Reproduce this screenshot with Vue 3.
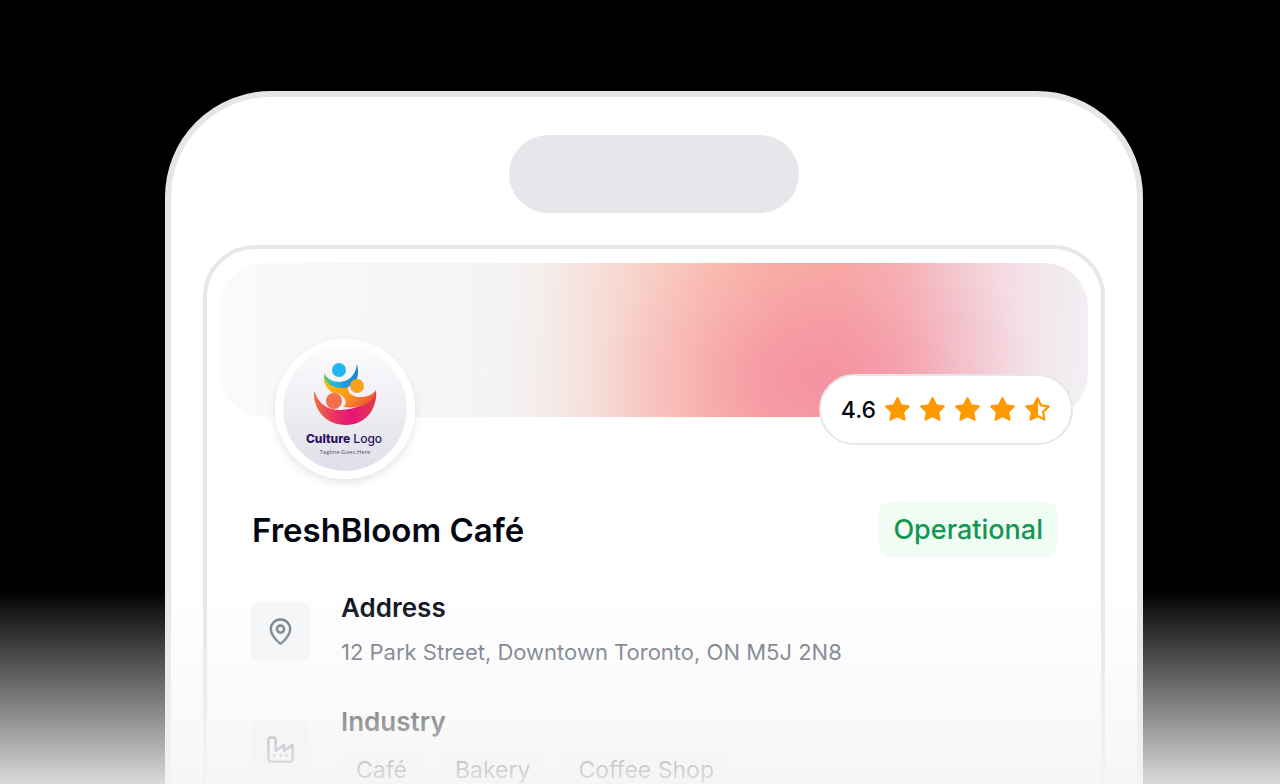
<script setup>
const stars = ['full', 'full', 'full', 'full', 'half']
const industries = ['Café', 'Bakery', 'Coffee Shop']
</script>

<template>
  <main class="stage">
    <section class="phone">
      <div class="island"></div>
      <article class="card">
        <div class="banner">
          <svg class="avatar" viewBox="0 0 124 124" role="img" aria-label="Culture Logo">
            <defs>
              <linearGradient id="plate" x1="0" y1="0" x2="0" y2="1">
                <stop offset="0" stop-color="#fcfcfe" />
                <stop offset="1" stop-color="#dfdfe9" />
              </linearGradient>
              <linearGradient id="blue" x1="0" y1="0" x2="1" y2="0">
                <stop offset="0" stop-color="#5cc66a" />
                <stop offset="0.35" stop-color="#20b4e0" />
                <stop offset="1" stop-color="#1c80d0" />
              </linearGradient>
              <linearGradient id="gold" x1="0" y1="0" x2="1" y2="0.6">
                <stop offset="0" stop-color="#b4cc2c" />
                <stop offset="0.2" stop-color="#fbb70c" />
                <stop offset="0.6" stop-color="#f99a1c" />
                <stop offset="1" stop-color="#ee5a34" />
              </linearGradient>
              <linearGradient id="red" x1="0" y1="0" x2="1" y2="0">
                <stop offset="0" stop-color="#f0703c" />
                <stop offset="0.3" stop-color="#ea3760" />
                <stop offset="0.6" stop-color="#e81578" />
                <stop offset="1" stop-color="#e23a48" />
              </linearGradient>
            </defs>
            <circle cx="62" cy="62" r="62" fill="url(#plate)" />
            <path d="M31 44C36 58 46 63 56 63C68 63 88 58 93 43C95 62 82 78 63 78C43 78 30 63 31 44Z" fill="url(#red)" />
            <path d="M41 28C45 38 54 41 65 40C64 47 72 51 79 50C85 50 90 47 93 43C91 56 80 62 60 60C66 57 62 46 50 46C44 42 40 36 41 28Z" fill="url(#gold)" />
            <path d="M41 26C44 32 50 35 57 35C67 34 73 27 74 17C77 28 74 40 60 41C48 41 41 35 41 26Z" fill="url(#blue)" />
            <circle cx="56" cy="23" r="7" fill="#20b8ee" />
            <circle cx="74" cy="39" r="7" fill="#f9a01c" />
            <circle cx="51" cy="54" r="8" fill="#f2714c" />
            <text x="61" y="96" class="brand"><tspan class="brand-bold">Culture</tspan> Logo</text>
            <text x="62" y="107" class="tagline">Tagline Goes Here</text>
          </svg>
          <div class="rating">
            <span>4.6</span>
            <svg v-for="(kind, i) in stars" :key="i" class="star" :class="kind" viewBox="0 0 24 24" aria-hidden="true">
              <path d="M12 17.750l-6.172 3.245l1.179 -6.873l-5 -4.867l6.900 -1l3.086 -6.253l3.086 6.253l6.900 1l-5 4.867l1.179 6.873z" />
              <path v-if="kind === 'half'" class="half-fill" d="M12.500 2v16l-6.672 3l1.179 -6.873l-5 -4.867l6.900 -1z" />
            </svg>
          </div>
        </div>

        <header class="heading">
          <h1>FreshBloom Café</h1>
          <span class="status">Operational</span>
        </header>

        <div class="row">
          <div class="tile">
            <svg viewBox="0 0 24 24" aria-hidden="true">
              <path d="M20 10c0 5-5.500 10.200-7.400 11.800a1 1 0 0 1-1.200 0C9.500 20.200 4 15 4 10a8 8 0 0 1 16 0z" />
              <circle cx="12" cy="10" r="3" />
            </svg>
          </div>
          <div class="info">
            <h2>Address</h2>
            <p>12 Park Street, Downtown Toronto, ON M5J 2N8</p>
          </div>
        </div>

        <div class="row">
          <div class="tile">
            <svg viewBox="0 0 24 24" aria-hidden="true">
              <path d="M2 20a2 2 0 0 0 2 2h16a2 2 0 0 0 2-2V8l-7 5V8l-7 5V4a2 2 0 0 0-2-2H4a2 2 0 0 0-2 2z" />
              <path d="M7 17h.01M12 17h.01M17 17h.01" />
            </svg>
          </div>
          <div class="info">
            <h2>Industry</h2>
            <ul class="chips">
              <li v-for="name in industries" :key="name">{{ name }}</li>
            </ul>
          </div>
        </div>
      </article>
    </section>
    <div class="fade"></div>
  </main>
</template>

<style>
body {
  background: #000;
}
</style>

<style scoped>
.stage {
  position: relative;
  box-sizing: border-box;
  height: 100vh;
  padding: 91px 137px 0 165px;
  overflow: hidden;
  background: #000;
  font-family: Inter, 'Liberation Sans', sans-serif;
  color: #030712;
}
.phone {
  display: flex;
  flex-direction: column;
  align-items: center;
  gap: 32px;
  padding: 38px 32px 120px;
  border: 6px solid #e5e5ea;
  border-radius: 106px 106px 0 0;
  background: #fff;
}
.island {
  width: 290px;
  height: 78px;
  border-radius: 39px;
  background: #e5e7eb;
}
.card {
  box-sizing: border-box;
  width: 100%;
  padding: 14px 13px 80px;
  border: 4px solid #e5e7e8;
  border-radius: 52px 52px 0 0;
}
.banner {
  position: relative;
  height: 154px;
  border-radius: 44px;
  background:
    radial-gradient(ellipse 26% 100% at 69% 75%, rgba(242, 136, 160, 0.7), rgba(243, 136, 160, 0.5) 30%, rgba(243, 136, 160, 0.2) 62%, transparent),
    linear-gradient(92deg, #fafafc, #f4f4f7 30%, #f5efee 36%, #f6e2dd 42%, #f8cfc7 49%, #f9bfb3 56%, #f9b0a6 64%, #f8aba5 71%, #f6b4b6 78%, #f3ccd4 85%, #f3e2e8 92%, #f1f0f4);
}
.avatar {
  position: absolute;
  left: 55px;
  top: 76px;
  width: 124px;
  height: 124px;
  border: 8px solid #fff;
  border-radius: 50%;
  box-shadow: 0 4px 8px rgba(0, 0, 0, 0.1);
}
.brand {
  font-size: 12px;
  font-weight: 500;
  text-anchor: middle;
  fill: #2b1260;
}
.brand-bold {
  font-weight: 800;
}
.tagline {
  font-family: 'Open Sans', sans-serif;
  font-size: 6px;
  text-anchor: middle;
  fill: #55555f;
}
.rating {
  position: absolute;
  right: 15px;
  top: 111px;
  display: flex;
  align-items: center;
  gap: 8px;
  padding: 0 20px;
  height: 67px;
  border: 2px solid #e7e7eb;
  border-radius: 36px;
  background: #fff;
  font-size: 23px;
  font-weight: 500;
}
.star {
  width: 27px;
  height: 27px;
  fill: #fe9a00;
  stroke: #fe9a00;
  stroke-width: 2;
  stroke-linejoin: round;
}
.star.half {
  fill: none;
}
.half-fill {
  fill: #fe9a00;
  stroke: none;
}
.heading {
  display: flex;
  align-items: center;
  justify-content: space-between;
  margin: 85px 31px 0 32px;
}
h1,
h2,
p,
ul {
  margin: 0;
}
h1 {
  font-size: 33px;
  line-height: 44px;
  font-weight: 600;
}
.status {
  padding: 0 14px;
  border-radius: 10px;
  background: #f0fdf4;
  color: #159552;
  font-size: 27px;
  line-height: 55px;
  font-weight: 500;
}
.row {
  display: flex;
  gap: 31px;
  margin: 33px 31px 0;
}
.tile {
  display: flex;
  align-items: center;
  justify-content: center;
  width: 59px;
  height: 59px;
  margin-top: 12px;
  border-radius: 8px;
  background: #f4f6f8;
}
.tile svg {
  width: 29px;
  height: 29px;
  fill: none;
  stroke: #6a7282;
  stroke-width: 2;
  stroke-linecap: round;
  stroke-linejoin: round;
}
.row + .row {
  margin-top: 34px;
}
.row + .row .tile {
  margin-top: 16px;
}
h2 {
  font-size: 26px;
  line-height: 36px;
  font-weight: 600;
}
p {
  margin-top: 8px;
  color: #5b6372;
  font-size: 22px;
  line-height: 36px;
}
.chips {
  display: flex;
  gap: 18px;
  margin-top: 8px;
  padding: 0;
  list-style: none;
}
.chips li {
  padding: 4px 15px 12px;
  border-radius: 8px;
  background: #f7f8f9;
  color: #1e2939;
  font-size: 23px;
  line-height: 36px;
}
.fade {
  position: absolute;
  right: 0;
  bottom: 0;
  left: 0;
  height: 194px;
  background: linear-gradient(rgba(245, 245, 245, 0), rgba(245, 245, 245, 0.89));
}
</style>
